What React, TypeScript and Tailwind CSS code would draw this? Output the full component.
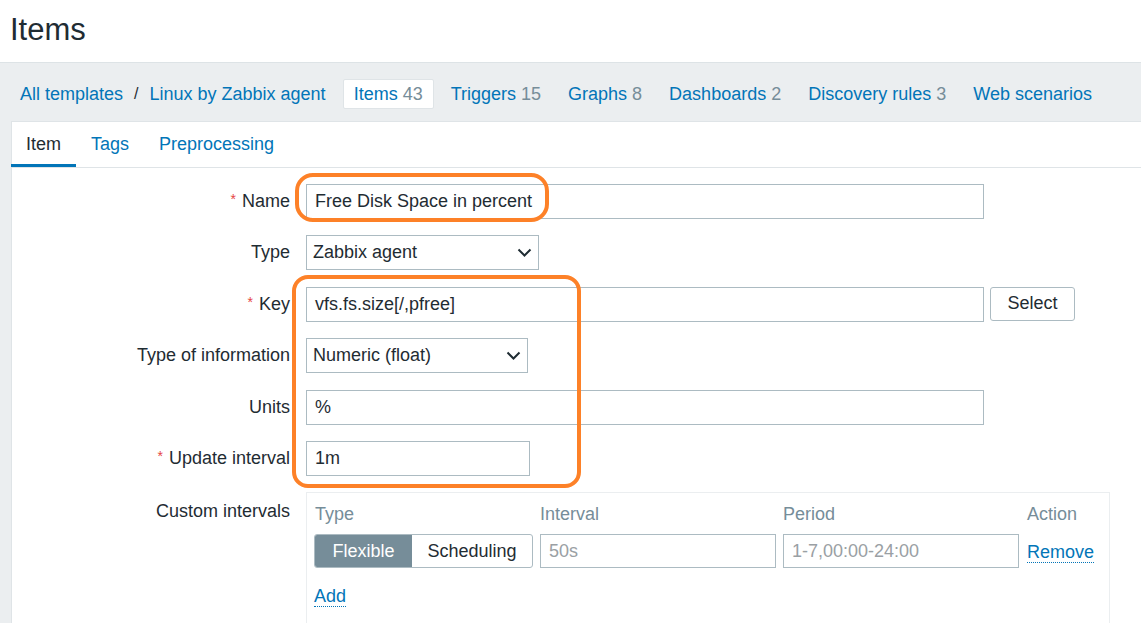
const inputCls =
  "h-[35px] border border-[#acbbc2] bg-white px-[8px] flex items-center text-[18px] text-[#1f2c33]";

function Chevron() {
  return (
    <svg width="15" height="9" viewBox="0 0 15 9" className="shrink-0">
      <path d="M1.5 1.5 L7.5 7.5 L13.5 1.5" fill="none" stroke="#1f2c33" strokeWidth="2" />
    </svg>
  );
}

function Label({ text, required }: { text: string; required?: boolean }) {
  return (
    <div className="w-[278px] shrink-0 text-right text-[18px] text-[#1f2c33] flex items-center justify-end h-[35px]">
      {required && <span className="text-[#e54545] text-[14px] mr-[6px] -mt-[4px]">*</span>}
      {text}
    </div>
  );
}

function NavLink({ text, count, active }: { text: string; count?: number; active?: boolean }) {
  return (
    <div
      className={`h-[30px] px-[10px] flex items-center rounded-[2px] ${
        active ? "bg-white border border-[#dfe4e7] px-[9px]" : ""
      }`}
    >
      <span className="text-[#0275b8]">{text}</span>
      {count !== undefined && <span className="text-[#768d99] ml-[5px]">{count}</span>}
    </div>
  );
}

export default function App() {
  return (
    <div className="relative w-[1141px] h-[623px] overflow-hidden bg-white font-['Liberation_Sans',Arial,sans-serif] text-[18px] text-[#1f2c33]">
      {/* header */}
      <div className="h-[62px] px-[10px] pt-[10px]">
        <h1 className="text-[31px] leading-[40px] text-[#1f2c33]">Items</h1>
      </div>

      <div className="bg-[#ebeef0] border-t border-[#dde3e6] h-full">
        {/* breadcrumbs + nav */}
        <div className="h-[58px] pt-[16px] pl-[20px] flex items-start">
          <div className="h-[30px] flex items-center text-[#0275b8]">All templates</div>
          <div className="h-[30px] flex items-center text-[#1f2c33] text-[16px] mx-[11px]">/</div>
          <div className="h-[30px] flex items-center text-[#0275b8] mr-[17px]">Linux by Zabbix agent</div>
          <div className="flex gap-[7px]">
            <NavLink text="Items" count={43} active />
            <NavLink text="Triggers" count={15} />
            <NavLink text="Graphs" count={8} />
            <NavLink text="Dashboards" count={2} />
            <NavLink text="Discovery rules" count={3} />
            <NavLink text="Web scenarios" />
          </div>
        </div>

        {/* panel */}
        <div className="ml-[11px] bg-white border-t border-l border-[#dfe4e7] h-full">
          <div className="flex h-[46px] border-b border-[#dfe4e7]">
            <div className="-ml-[1px] px-[15px] flex items-center border-b-[3px] border-[#0275b8] text-[#1f2c33] pt-[3px]">Item</div>
            <div className="px-[15px] flex items-center text-[#0275b8]">Tags</div>
            <div className="px-[15px] flex items-center text-[#0275b8]">Preprocessing</div>
          </div>

          <div className="pt-[16px] flex flex-col gap-[16.4px]">
            <div className="flex gap-[16px]">
              <Label text="Name" required />
              <div className={`${inputCls} w-[678px]`}>Free Disk Space in percent</div>
            </div>
            <div className="flex gap-[16px]">
              <Label text="Type" />
              <div className={`${inputCls} w-[233px] justify-between pr-[6px]`}>
                <span className="-ml-[2px]">Zabbix agent</span>
                <Chevron />
              </div>
            </div>
            <div className="flex gap-[16px]">
              <Label text="Key" required />
              <div className={`${inputCls} w-[678px]`}>vfs.fs.size[/,pfree]</div>
              <div className="-ml-[10px] h-[34px] w-[85px] border border-[#acbbc2] rounded-[3px] flex items-center justify-center text-[#1f2c33]">
                Select
              </div>
            </div>
            <div className="flex gap-[16px]">
              <Label text="Type of information" />
              <div className={`${inputCls} w-[222px] justify-between pr-[6px]`}>
                <span className="-ml-[2px]">Numeric (float)</span>
                <Chevron />
              </div>
            </div>
            <div className="flex gap-[16px]">
              <Label text="Units" />
              <div className={`${inputCls} w-[678px]`}>%</div>
            </div>
            <div className="flex gap-[16px]">
              <Label text="Update interval" required />
              <div className={`${inputCls} w-[224px]`}>1m</div>
            </div>
            <div className="flex gap-[16px]">
              <div className="w-[278px] shrink-0 text-right pt-[6px]">Custom intervals</div>
              <div className="w-[804px] h-[200px] border border-[#ebeef0] px-[7px] pt-[9px]">
                <div className="flex h-[24px] items-center text-[#768d99]">
                  <div className="w-[226px] pl-[1px]">Type</div>
                  <div className="w-[243px]">Interval</div>
                  <div className="w-[244px]">Period</div>
                  <div>Action</div>
                </div>
                <div className="flex items-center mt-[8px] h-[34px]">
                  <div className="flex h-[34px] w-[219px] rounded-[3px] border border-[#acbbc2] overflow-hidden">
                    <div className="w-[97px] bg-[#768d99] text-white flex items-center justify-center">Flexible</div>
                    <div className="flex-1 flex items-center justify-center text-[#1f2c33]">Scheduling</div>
                  </div>
                  <div className="ml-[7px] w-[236px] h-[34px] border border-[#acbbc2] flex items-center px-[8px] text-[#9aa0a4]">
                    50s
                  </div>
                  <div className="ml-[7px] w-[236px] h-[34px] border border-[#acbbc2] flex items-center px-[8px] text-[#9aa0a4]">
                    1-7,00:00-24:00
                  </div>
                  <div className="ml-[8px] text-[#0275b8] border-b border-dotted border-[#0275b8] leading-[20px] mt-[2px]">
                    Remove
                  </div>
                </div>
                <div className="mt-[18px] inline-block text-[#0275b8] border-b border-dotted border-[#0275b8] leading-[20px]">
                  Add
                </div>
              </div>
            </div>
          </div>
        </div>
      </div>

      {/* orange annotations */}
      <div className="absolute left-[295px] top-[173px] w-[254px] h-[49px] border-[4px] border-[#fd8128] rounded-[18px] pointer-events-none" />
      <div className="absolute left-[292px] top-[275px] w-[289px] h-[213px] border-[4px] border-[#fd8128] rounded-[16px] pointer-events-none" />
    </div>
  );
}
